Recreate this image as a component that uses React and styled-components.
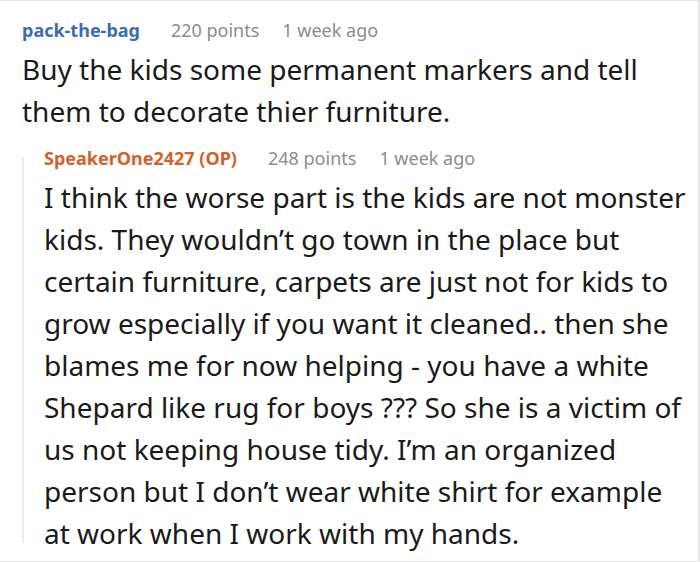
import React from 'react'
import styled, { createGlobalStyle } from 'styled-components'

const GlobalStyle = createGlobalStyle`
  html, body {
    margin: 0;
    padding: 0;
    background: #fff;
  }
  body {
    font-family: "Noto Sans", "Open Sans", sans-serif;
  }
`

const Frame = styled.div`
  width: 700px;
  height: 562px;
  box-sizing: border-box;
  border-top: 1px solid #e6e6e6;
  border-right: 2px solid #e6e6e6;
  border-bottom: 1px solid #e6e6e6;
  padding: 16px 10px 0 22px;
  overflow: hidden;
`

const Meta = styled.div`
  display: flex;
  align-items: baseline;
  gap: 23px;
  font-size: 18px;
  line-height: 26px;
  margin-bottom: 5px;
`

const Author = styled.span`
  font-weight: 700;
  color: ${(p) => (p.$op ? '#d3622a' : '#3c6cb4')};
  margin-right: 8px;
`

const Info = styled.span`
  color: #8c8c8c;
`

const Body = styled.p`
  margin: 0;
  font-size: 28px;
  line-height: 42px;
  color: #1a1a1a;
`

const Reply = styled.div`
  position: relative;
  margin-top: 13px;
  padding-left: 22px;

  &::before {
    content: '';
    position: absolute;
    left: 0;
    top: 12px;
    bottom: 11px;
    width: 2px;
    background: #ececec;
  }
`

const Comment = ({ author, op, points, when, text }) => (
  <>
    <Meta>
      <Author $op={op}>{author}</Author>
      <Info>{points} points</Info>
      <Info>{when}</Info>
    </Meta>
    <Body>{text}</Body>
  </>
)

export default function App() {
  return (
    <>
      <GlobalStyle />
      <Frame>
        <Comment
          author="pack-the-bag"
          points={220}
          when="1 week ago"
          text="Buy the kids some permanent markers and tell them to decorate thier furniture."
        />
        <Reply>
          <Comment
            author="SpeakerOne2427 (OP)"
            op
            points={248}
            when="1 week ago"
            text="I think the worse part is the kids are not monster kids. They wouldn’t go town in the place but certain furniture, carpets are just not for kids to grow especially if you want it cleaned.. then she blames me for now helping - you have a white Shepard like rug for boys ??? So she is a victim of us not keeping house tidy. I’m an organized person but I don’t wear white shirt for example at work when I work with my hands."
          />
        </Reply>
      </Frame>
    </>
  )
}
